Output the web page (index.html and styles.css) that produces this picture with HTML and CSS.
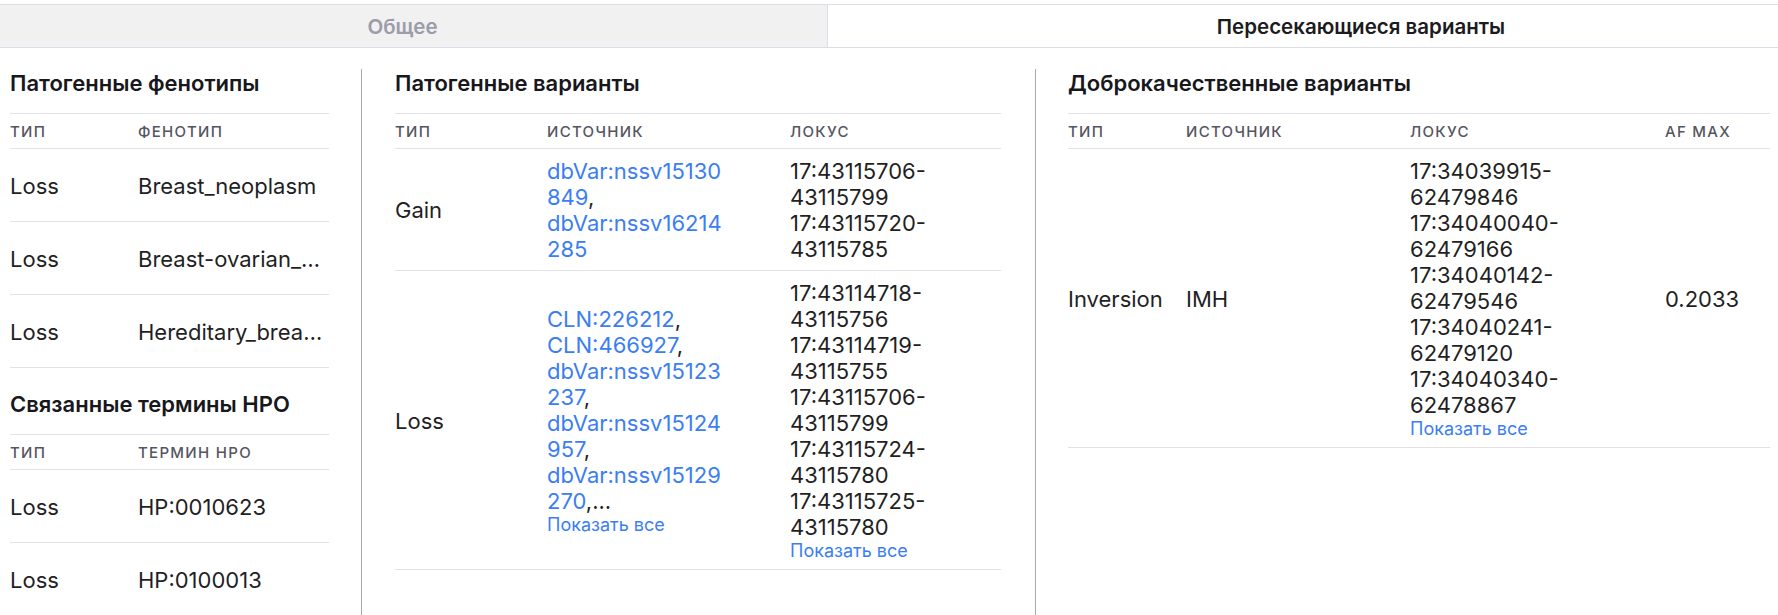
FILE: index.html
```html
<!DOCTYPE html>
<html lang="ru">
<head>
<meta charset="utf-8">
<title>Пересекающиеся варианты</title>
<link rel="stylesheet" href="styles.css">
</head>
<body>
<div class="tabs">
  <div class="tab tab-inactive">Общее</div>
  <div class="tab tab-active">Пересекающиеся варианты</div>
</div>
<div class="content">
  <section class="col col-left">
    <h2 class="title">Патогенные фенотипы</h2>
    <table class="grid">
      <colgroup><col class="w-128"><col></colgroup>
      <thead><tr><th>Тип</th><th>Фенотип</th></tr></thead>
      <tbody>
        <tr class="single"><td>Loss</td><td><div class="clip">Breast_neoplasm</div></td></tr>
        <tr class="single"><td>Loss</td><td><div class="clip">Breast-ovarian_cancer,_familial_1</div></td></tr>
        <tr class="single"><td>Loss</td><td><div class="clip">Hereditary_breast_and_ovarian_cancer_syndrome</div></td></tr>
      </tbody>
    </table>
    <h2 class="title title-second">Связанные термины HPO</h2>
    <table class="grid">
      <colgroup><col class="w-128"><col></colgroup>
      <thead><tr><th>Тип</th><th>Термин HPO</th></tr></thead>
      <tbody>
        <tr class="single"><td>Loss</td><td>HP:0010623</td></tr>
        <tr class="single"><td>Loss</td><td>HP:0100013</td></tr>
      </tbody>
    </table>
  </section>

  <section class="col col-mid">
    <h2 class="title">Патогенные варианты</h2>
    <table class="grid">
      <colgroup><col class="w-152"><col class="w-243"><col></colgroup>
      <thead><tr><th>Тип</th><th>Источник</th><th>Локус</th></tr></thead>
      <tbody>
        <tr>
          <td>Gain</td>
          <td>
            <div class="src"><a class="ref">dbVar:nssv15130849</a>,</div>
            <div class="src"><a class="ref">dbVar:nssv16214285</a></div>
          </td>
          <td>
            <div class="locus">17:43115706-43115799</div>
            <div class="locus">17:43115720-43115785</div>
          </td>
        </tr>
        <tr>
          <td>Loss</td>
          <td>
            <div class="src"><a class="ref">CLN:226212</a>,</div>
            <div class="src"><a class="ref">CLN:466927</a>,</div>
            <div class="src"><a class="ref">dbVar:nssv15123237</a>,</div>
            <div class="src"><a class="ref">dbVar:nssv15124957</a>,</div>
            <div class="src"><a class="ref">dbVar:nssv15129270</a>,...</div>
            <a class="more">Показать все</a>
          </td>
          <td>
            <div class="locus">17:43114718-43115756</div>
            <div class="locus">17:43114719-43115755</div>
            <div class="locus">17:43115706-43115799</div>
            <div class="locus">17:43115724-43115780</div>
            <div class="locus">17:43115725-43115780</div>
            <a class="more">Показать все</a>
          </td>
        </tr>
      </tbody>
    </table>
  </section>

  <section class="col col-right">
    <h2 class="title">Доброкачественные варианты</h2>
    <table class="grid">
      <colgroup><col class="w-118"><col class="w-224"><col class="w-255"><col></colgroup>
      <thead><tr><th>Тип</th><th>Источник</th><th>Локус</th><th>AF max</th></tr></thead>
      <tbody>
        <tr>
          <td>Inversion</td>
          <td>IMH</td>
          <td>
            <div class="locus">17:34039915-62479846</div>
            <div class="locus">17:34040040-62479166</div>
            <div class="locus">17:34040142-62479546</div>
            <div class="locus">17:34040241-62479120</div>
            <div class="locus">17:34040340-62478867</div>
            <a class="more">Показать все</a>
          </td>
          <td>0.2033</td>
        </tr>
      </tbody>
    </table>
  </section>
</div>
</body>
</html>
```

FILE: styles.css
```css
html, body {
  margin: 0;
  padding: 0;
  background: #ffffff;
}
body {
  font-family: Inter, "Noto Sans", "Liberation Sans", sans-serif;
  color: #1f1f24;
  overflow: hidden;
}

.tabs {
  display: flex;
  margin-top: 4px;
  border-top: 1px solid #dcdde6;
  border-bottom: 1px solid #dcdde6;
  height: 42px;
}
.tab {
  display: flex;
  align-items: center;
  justify-content: center;
  font-size: 20.5px;
  font-weight: 600;
}
.tab-inactive {
  width: 805px;
  padding-right: 22px;
  background: #f1f1f2;
  color: #9c9ca8;
  border-right: 1px solid #dcdde6;
}
.tab-active {
  flex: 1;
  padding-left: 116px;
  color: #1b1b20;
}

.content {
  display: flex;
  align-items: stretch;
  padding-left: 10px;
  margin-top: 21px;
  min-height: 546px;
}
.col-left {
  width: 319px;
}
.col-mid {
  width: 606px;
  margin-left: 32px;
  padding-left: 33px;
  border-left: 1px solid #a8a8b6;
}
.col-right {
  width: 702px;
  margin-left: 34px;
  padding-left: 32px;
  border-left: 1px solid #a8a8b6;
}

.title {
  margin: 0 0 16px 0;
  font-size: 22px;
  line-height: 28px;
  font-weight: 600;
  color: #17171c;
}
.title-second {
  margin-top: 22px;
}

.grid {
  width: 100%;
  border-collapse: collapse;
  table-layout: fixed;
}
.w-128 { width: 128px; }
.w-152 { width: 152px; }
.w-243 { width: 243px; }
.w-118 { width: 118px; }
.w-224 { width: 224px; }
.w-255 { width: 255px; }

.grid th {
  height: 34px;
  padding: 0;
  text-align: left;
  font-size: 15px;
  font-weight: 500;
  letter-spacing: 1.3px;
  text-transform: uppercase;
  color: #55555f;
  border-top: 1px solid #e1e1e9;
  border-bottom: 1px solid #e1e1e9;
}
.grid td {
  padding: 9px 0 8px 0;
  vertical-align: middle;
  font-size: 22px;
  line-height: 26px;
  border-bottom: 1px solid #e1e1e9;
}
.grid tr.single td {
  height: 55px;
}

.clip {
  max-width: 186px;
  overflow: hidden;
  white-space: nowrap;
  text-overflow: ellipsis;
}
.src {
  width: 182px;
  overflow-wrap: anywhere;
}
.locus {
  max-width: 200px;
}
.ref {
  color: #3b7ef3;
}
.more {
  display: block;
  font-size: 18px;
  line-height: 21px;
  color: #3b7ef3;
}
```
